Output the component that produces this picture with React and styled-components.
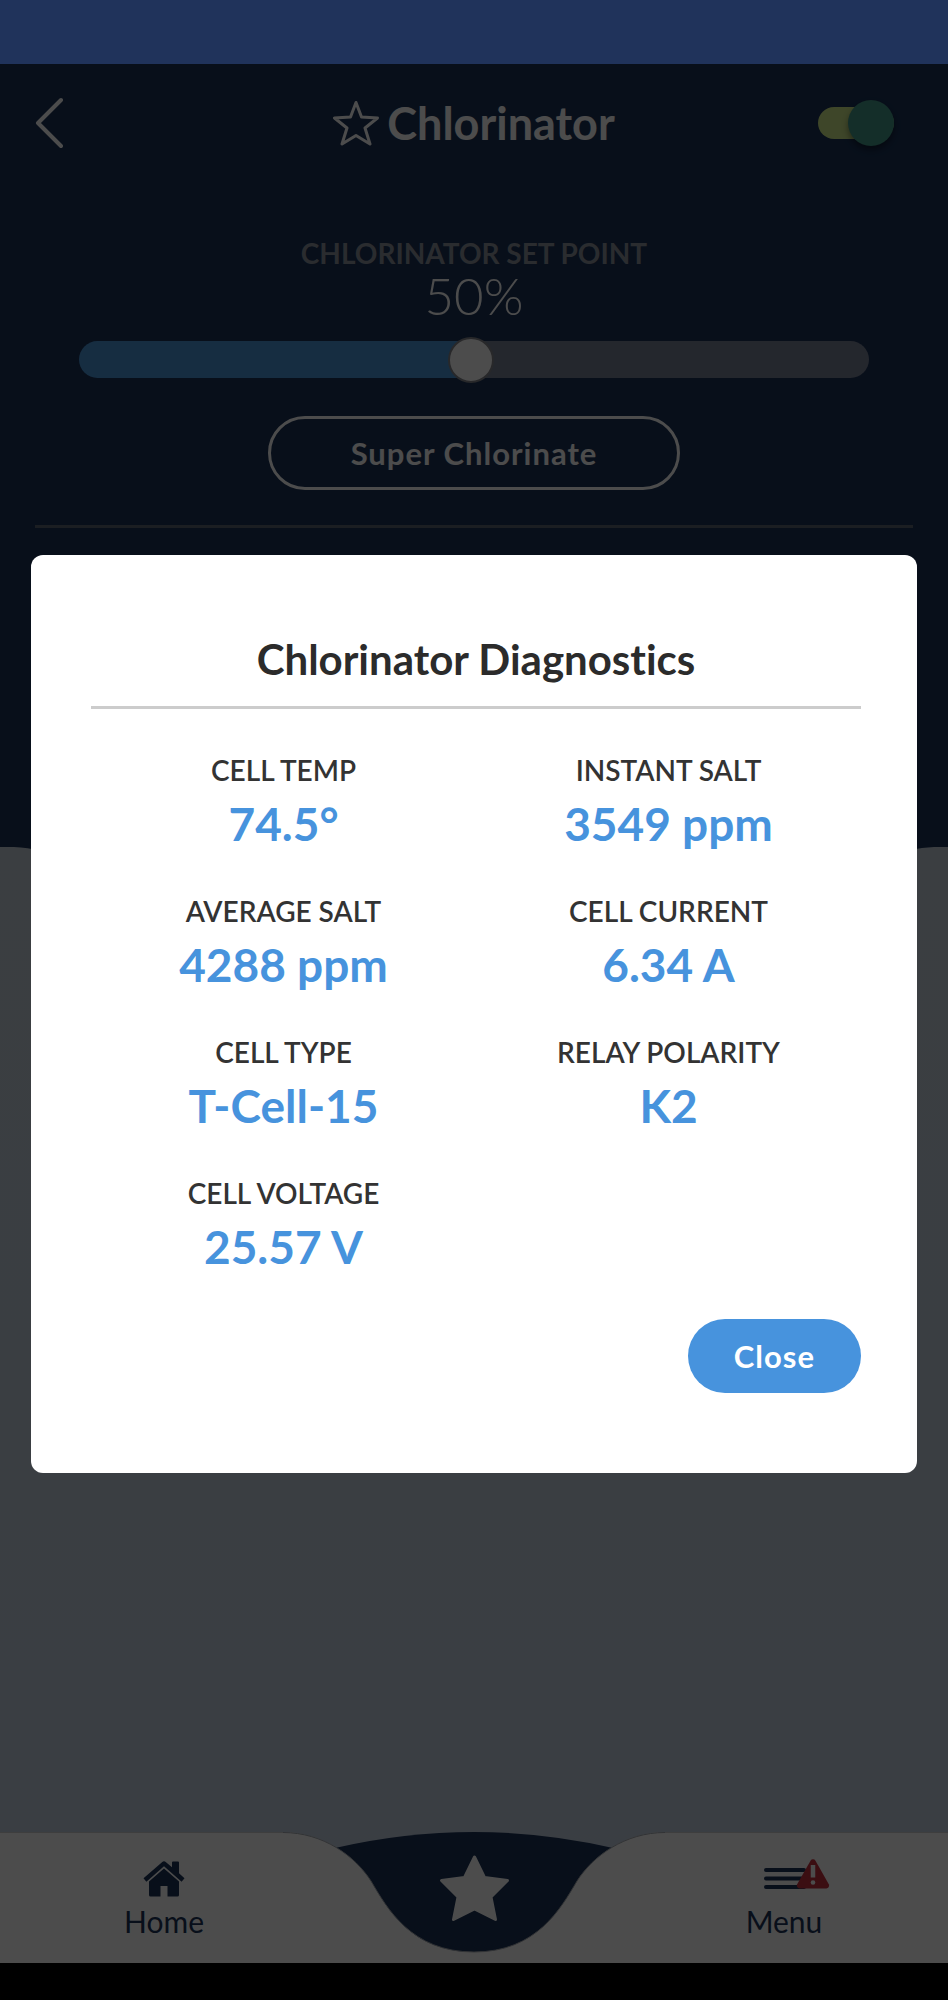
import React, { useState } from "react";
import styled, { createGlobalStyle } from "styled-components";

const GlobalStyle = createGlobalStyle`
  * {
    box-sizing: border-box;
  }

  body {
    margin: 0;
    background: #000;
    font-family: Lato, "Liberation Sans", sans-serif;
    font-variant-ligatures: none;
  }

  button, input {
    font-family: inherit;
    margin: 0;
  }
`;

// Page shell
const Page = styled.div`
  display: flex;
  flex-direction: column;
  min-height: 100vh;
  padding-bottom: 37px;
`;

const StatusBar = styled.div`
  height: 64px;
  background: #20335b;
`;

const Screen = styled.div`
  position: relative;
  flex: 1;
  display: flex;
  flex-direction: column;
`;

const Panel = styled.main`
  flex: 1;
  display: flex;
  flex-direction: column;
`;

const Controls = styled.section`
  display: flex;
  flex-direction: column;
  align-items: center;
  min-height: 783px;
  padding: 0 35px;
  background: #1b3359;
`;

const Sheet = styled.section`
  flex: 1;
  background: linear-gradient(#c5cfda, #c3cfe0);
`;

const SheetCurve = styled.svg`
  display: block;
  width: 100%;
  height: 60px;
`;

// Header
const Header = styled.header`
  align-self: stretch;
  display: grid;
  grid-template-columns: 1fr auto 1fr;
  align-items: center;
  height: 117px;
`;

const IconButton = styled.button`
  display: flex;
  padding: 0;
  border: none;
  background: none;
  color: #fff;
  cursor: pointer;
`;

const TitleGroup = styled.div`
  display: flex;
  align-items: center;
  gap: 8px;
`;

const Title = styled.h1`
  margin: 0;
  color: #fff;
  font-size: 45px;
  font-weight: 700;
  line-height: 56px;
`;

const Toggle = styled.input`
  appearance: none;
  justify-self: end;
  display: flex;
  align-items: center;
  justify-content: flex-end;
  width: 76px;
  height: 32px;
  margin-right: 19px;
  border-radius: 16px;
  background: #cfe98a;
  cursor: pointer;

  &::before {
    content: "";
    width: 46px;
    height: 46px;
    border-radius: 50%;
    background: #439a89;
    box-shadow: 0 4px 6px rgba(0, 0, 0, 0.4);
  }

  &:not(:checked) {
    justify-content: flex-start;
  }
`;

// Set point
const SetPoint = styled.div`
  align-self: stretch;
  display: flex;
  flex-direction: column;
  align-items: center;
  margin-top: 54px;
  padding: 0 44px;
`;

const SetPointLabel = styled.label`
  color: #8d939f;
  font-size: 28px;
  font-weight: 700;
  line-height: 36px;
`;

const SetPointValue = styled.output`
  color: #fff;
  font-size: 51px;
  font-weight: 300;
  line-height: 50px;
`;

const Slider = styled.input`
  appearance: none;
  width: 100%;
  height: 37px;
  margin-top: 20px;
  border-radius: 19px;
  background: linear-gradient(
    to right,
    #4a96da ${props => props.value}%,
    #7a8296 ${props => props.value}%
  );
  cursor: pointer;

  &::-webkit-slider-thumb {
    appearance: none;
    width: 46px;
    height: 46px;
    border: 2px solid #85888d;
    border-radius: 50%;
    background: #fff;
  }
`;

const OutlineButton = styled.button`
  height: 74px;
  margin-top: 38px;
  padding: 0 80px;
  border: 3px solid #fff;
  border-radius: 37px;
  background: none;
  color: #fff;
  font-size: 31px;
  font-weight: 700;
  letter-spacing: 1px;
  cursor: pointer;
`;

const Divider = styled.hr`
  align-self: stretch;
  height: 3px;
  margin: 35px 0 0;
  border: none;
  background: #5b6473;
`;

// Bottom navigation
const Nav = styled.nav`
  display: flex;
  height: 131px;
  background: #c3cfe0;
`;

const NavSide = styled.div`
  flex: 1;
  display: flex;
  justify-content: center;
  padding: ${props => (props.$side === "left" ? "22px 0 0 45px" : "22px 45px 0 0")};
  border-top: 1px solid #d0d0d0;
  background: #fff;
`;

const NavLink = styled.a`
  display: flex;
  flex-direction: column;
  align-items: center;
  color: #1b3359;
  font-size: 30px;
  line-height: 36px;
  text-decoration: none;
`;

const NavIcon = styled.span`
  display: flex;
  align-items: center;
  justify-content: center;
  height: 48px;

  svg {
    overflow: visible;
  }
`;

const Favorites = styled.a`
  display: block;
  width: 382px;
  height: 131px;
`;

// Dialog
const Overlay = styled.div`
  position: absolute;
  inset: 0;
  display: flex;
  align-items: center;
  justify-content: center;
  padding: 0 31px;
  background: rgba(0, 0, 0, 0.7);
`;

const Dialog = styled.div`
  display: flex;
  flex-direction: column;
  width: 100%;
  padding: 77px 56px 80px 60px;
  border-radius: 12px;
  background: #fff;
`;

const DialogTitle = styled.h2`
  margin: 0;
  padding-bottom: 19px;
  border-bottom: 3px solid #ccc;
  color: #2b2b2b;
  font-size: 42px;
  font-weight: 700;
  line-height: 55px;
  text-align: center;
`;

const Readings = styled.dl`
  display: grid;
  grid-template-columns: 1fr 1fr;
  row-gap: 41px;
  margin: 43px 0 0;
`;

const Reading = styled.div`
  display: flex;
  flex-direction: column;
  align-items: center;
`;

const ReadingLabel = styled.dt`
  color: #333;
  font-size: 28px;
  font-weight: 600;
  line-height: 36px;
`;

const ReadingValue = styled.dd`
  margin: 8px 0 0;
  color: #4793dd;
  font-size: 46px;
  font-weight: 700;
  line-height: 56px;
`;

const CloseButton = styled.button`
  align-self: flex-end;
  height: 74px;
  margin-top: 44px;
  padding: 0 46px;
  border: none;
  border-radius: 37px;
  background: #4793dd;
  color: #fff;
  font-size: 31px;
  font-weight: 700;
  letter-spacing: 1px;
  cursor: pointer;
`;

const readings = [
  { label: "CELL TEMP", value: "74.5°" },
  { label: "INSTANT SALT", value: "3549 ppm" },
  { label: "AVERAGE SALT", value: "4288 ppm" },
  { label: "CELL CURRENT", value: "6.34 A" },
  { label: "CELL TYPE", value: "T-Cell-15" },
  { label: "RELAY POLARITY", value: "K2" },
  { label: "CELL VOLTAGE", value: "25.57 V" },
];

const BackIcon = () => (
  <svg width="28" height="52" viewBox="0 0 28 52" fill="none" stroke="currentColor" strokeWidth="4" strokeLinecap="round" strokeLinejoin="round">
    <path d="M26 3 3 26l23 23" />
  </svg>
);

const StarOutlineIcon = () => (
  <svg width="46" height="46" viewBox="0 0 46 46" fill="none" stroke="currentColor" strokeWidth="3" strokeLinejoin="round">
    <path d="M23 2.500 28.500 17 44.500 18 32 28 37 44 23 35.500 9 44 14 28 1.500 18 17.500 17z" />
  </svg>
);

const HomeIcon = () => (
  <svg width="42" height="36" viewBox="0 0 42 36" fill="currentColor">
    <path d="M21 7.500 36 20.500V34a1.500 1.500 0 0 1-1.500 1.500H24.500V25h-7v10.500h-10A1.500 1.500 0 0 1 6 34V20.500z" />
    <path d="M19 1.200a3 3 0 0 1 4 0l6 5V1.500a1 1 0 0 1 1-1h5a1 1 0 0 1 1 1v10.700l5.500 5.100-2.900 3.500L21 5.300 3.400 20.800.5 17.300z" />
  </svg>
);

// The alert badge hangs over the right edge so the lines stay centered
const MenuAlertIcon = () => (
  <svg width="42" height="36" viewBox="0 0 42 36">
    <path d="M3 9h38M3 17.500h38M3 26h38" stroke="#1b3359" strokeWidth="4" strokeLinecap="round" />
    <path d="M47.500-.3a3 3 0 0 1 5 0l13.300 23.500a3 3 0 0 1-2.400 4.300H36.600a3 3 0 0 1-2.400-4.300z" fill="#c5303f" />
    <path d="M50 4v12.500" stroke="#fff" strokeWidth="4.500" />
    <circle cx="50" cy="21.500" r="2.300" fill="#fff" />
  </svg>
);

const FavoritesShape = () => (
  <svg width="382" height="131" viewBox="0 0 382 131">
    <path d="M52 16Q191-16 330 16V124H52z" fill="#1b3359" />
    <path d="M0 0C40 0 72 24 88 49C104 76 128 120 191 120C254 120 278 76 294 49C310 24 342 0 382 0V131H0z" fill="#fff" />
    <path d="M0 .5C40 .5 72 24 88 49C104 76 128 120 191 120C254 120 278 76 294 49C310 24 342 .5 382 .5" fill="none" stroke="#a3a8b0" />
    <path d="M191.500 25 201.500 45.500 224.500 48.500 208 65 212.500 87.500 191.500 77 170.500 87.500 175 65 158.500 48.500 181.500 45.500z" fill="#fff" stroke="#fff" strokeWidth="3" strokeLinejoin="round" />
  </svg>
);

const App = () => {
  const [enabled, setEnabled] = useState(true);
  const [setPoint, setSetPoint] = useState(49.6);
  const [showDiagnostics, setShowDiagnostics] = useState(true);

  return (
    <Page>
      <GlobalStyle />
      <StatusBar />
      <Screen>
        <Panel>
          <Controls>
            <Header>
              <IconButton aria-label="Back">
                <BackIcon />
              </IconButton>
              <TitleGroup>
                <IconButton aria-label="Add to favorites">
                  <StarOutlineIcon />
                </IconButton>
                <Title>Chlorinator</Title>
              </TitleGroup>
              <Toggle
                type="checkbox"
                aria-label="Chlorinator on"
                checked={enabled}
                onChange={(e) => setEnabled(e.target.checked)}
              />
            </Header>
            <SetPoint>
              <SetPointLabel htmlFor="set-point">CHLORINATOR SET POINT</SetPointLabel>
              <SetPointValue htmlFor="set-point">{Math.round(setPoint)}%</SetPointValue>
              <Slider
                id="set-point"
                type="range"
                min="0"
                max="100"
                step="any"
                value={setPoint}
                onChange={(e) => setSetPoint(Number(e.target.value))}
              />
            </SetPoint>
            <OutlineButton>Super Chlorinate</OutlineButton>
            <Divider />
          </Controls>
          <Sheet>
            <SheetCurve viewBox="0 0 948 60" preserveAspectRatio="none">
              <path d="M14 0C90 4 120 60 220 60H728C828 60 858 4 934 0z" fill="#1b3359" />
            </SheetCurve>
          </Sheet>
        </Panel>

        <Nav>
          <NavSide $side="left">
            <NavLink href="#home">
              <NavIcon><HomeIcon /></NavIcon>
              Home
            </NavLink>
          </NavSide>
          <Favorites href="#favorites" aria-label="Favorites">
            <FavoritesShape />
          </Favorites>
          <NavSide $side="right">
            <NavLink href="#menu">
              <NavIcon><MenuAlertIcon /></NavIcon>
              Menu
            </NavLink>
          </NavSide>
        </Nav>

        {showDiagnostics && (
          <Overlay>
            <Dialog role="dialog" aria-modal="true" aria-labelledby="diagnostics-title">
              <DialogTitle id="diagnostics-title">Chlorinator Diagnostics</DialogTitle>
              <Readings>
                {readings.map(({ label, value }) => (
                  <Reading key={label}>
                    <ReadingLabel>{label}</ReadingLabel>
                    <ReadingValue>{value}</ReadingValue>
                  </Reading>
                ))}
              </Readings>
              <CloseButton onClick={() => setShowDiagnostics(false)}>Close</CloseButton>
            </Dialog>
          </Overlay>
        )}
      </Screen>
    </Page>
  );
};

export default App;
